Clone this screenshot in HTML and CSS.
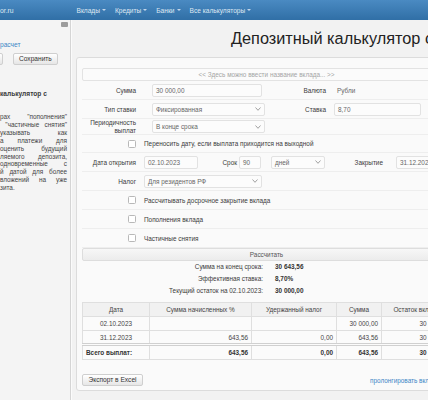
FILE: index.html
```html
<!DOCTYPE html>
<html lang="ru">
<head>
<meta charset="utf-8">
<title>Депозитный калькулятор</title>
<link rel="stylesheet" href="styles.css">
</head>
<body>
<header class="navbar">
  <div class="brand">or.ru</div>
  <nav class="menu">
    <span class="menu-item">Вклады<i class="caret"></i></span>
    <span class="menu-item">Кредиты<i class="caret"></i></span>
    <span class="menu-item">Банки<i class="caret"></i></span>
    <span class="menu-item">Все калькуляторы<i class="caret"></i></span>
  </nav>
</header>
<div class="layout">
  <aside class="sidebar">
    <div class="side-toggle"></div>
    <a class="side-link">расчет</a>
    <div class="side-buttons">
      <button class="btn btn-cut">Загрузить</button>
      <button class="btn">Сохранить</button>
    </div>
    <div class="side-heading">калькулятор с</div>
    <div class="side-text">
      <div class="jl">рах "пополнения"</div>
      <div class="jl">&nbsp;"частичные снятия"</div>
      <div class="jl">указывать как</div>
      <div class="jl">а платежи для</div>
      <div class="jl">оценить будущий</div>
      <div class="jl">ляемого депозита,</div>
      <div class="jl">одновременные с</div>
      <div class="jl">й датой для более</div>
      <div class="jl">вложений на уже</div>
      <div>зита.</div>
    </div>
  </aside>
  <main class="content">
    <h1 class="title">Депозитный калькулятор с капитализацией</h1>
    <div class="card">
      <div class="name-input">&lt;&lt; Здесь можно ввести название вклада... &gt;&gt;</div>

      <div class="row grid-row">
        <span class="lbl">Сумма</span>
        <div class="input">30 000,00</div>
        <span class="lbl">Валюта</span>
        <div class="plain">Рубли</div>
      </div>

      <div class="row grid-row">
        <span class="lbl">Тип ставки</span>
        <div class="input select w113">Фиксированная<svg class="chev" viewBox="0 0 6 4"><polyline points="0.5,0.5 3,3.3 5.5,0.5"/></svg></div>
        <span class="lbl">Ставка</span>
        <div class="input">8,70</div>
      </div>

      <div class="row grid-row row-c">
        <span class="lbl two">Периодичность<br>выплат</span>
        <div class="input select w113">В конце срока<svg class="chev" viewBox="0 0 6 4"><polyline points="0.5,0.5 3,3.3 5.5,0.5"/></svg></div>
      </div>

      <div class="row row-d">
        <span class="lbl-box"><span class="check"></span></span>
        <span class="ctext">Переносить дату, если выплата приходится на выходной</span>
      </div>

      <div class="row">
        <span class="lbl w54">Дата открытия</span>
        <div class="input date-open">02.10.2023</div>
        <span class="lbl srok-lbl">Срок</span>
        <div class="input srok">90</div>
        <div class="input select days">дней<svg class="chev" viewBox="0 0 6 4"><polyline points="0.5,0.5 3,3.3 5.5,0.5"/></svg></div>
        <span class="lbl close-lbl">Закрытие</span>
        <div class="input date-close">31.12.2023</div>
      </div>

      <div class="row">
        <span class="lbl w54">Налог</span>
        <div class="input select tax">Для резидентов РФ<svg class="chev" viewBox="0 0 6 4"><polyline points="0.5,0.5 3,3.3 5.5,0.5"/></svg></div>
      </div>

      <div class="row">
        <span class="lbl-box"><span class="check"></span></span>
        <span class="ctext">Рассчитывать досрочное закрытие вклада</span>
      </div>

      <div class="row">
        <span class="lbl-box"><span class="check"></span></span>
        <span class="ctext">Пополнения вклада</span>
      </div>

      <div class="row">
        <span class="lbl-box"><span class="check"></span></span>
        <span class="ctext">Частичные снятия</span>
      </div>

      <div class="calc">Рассчитать</div>

      <dl class="summary">
        <dt>Сумма на конец срока:</dt><dd>30 643,56</dd>
        <dt>Эффективная ставка:</dt><dd>8,70%</dd>
        <dt>Текущий остаток на 02.10.2023:</dt><dd>30 000,00</dd>
      </dl>

      <table class="table">
        <colgroup>
          <col class="c1"><col class="c2"><col class="c3"><col class="c4"><col class="c5">
        </colgroup>
        <thead>
          <tr><th>Дата</th><th>Сумма начисленных %</th><th>Удержанный налог</th><th>Сумма</th><th>Остаток вклада</th></tr>
        </thead>
        <tbody>
          <tr><td class="center">02.10.2023</td><td></td><td></td><td class="num">30 000,00</td><td class="num">30 000,00</td></tr>
          <tr><td class="center">31.12.2023</td><td class="num">643,56</td><td class="num">0,00</td><td class="num">643,56</td><td class="num">30 643,56</td></tr>
          <tr class="total"><td>Всего выплат:</td><td class="num">643,56</td><td class="num">0,00</td><td class="num">643,56</td><td class="num">30 643,56</td></tr>
        </tbody>
      </table>

      <div class="actions">
        <button class="btn btn-export">Экспорт в Excel</button>
        <a class="link">пролонгировать вклад</a>
      </div>
    </div>
  </main>
</div>
</body>
</html>
```

FILE: styles.css
```css
* { box-sizing: border-box; }
html, body { margin: 0; padding: 0; }
body {
  width: 428px;
  height: 400px;
  overflow: hidden;
  background: #f2f2f2;
  font-family: "Liberation Sans", Arial, sans-serif;
  font-size: 6.4px;
  color: #3a3a3a;
}

/* navbar */
.navbar {
  height: 20px;
  display: flex;
  align-items: center;
  background: linear-gradient(#4a8ac2, #306fa6);
  color: #dfe8f2;
  white-space: nowrap;
}
.brand { width: 72px; flex: none; font-size: 6.8px; }
.menu { display: flex; font-size: 6.6px; }
.menu-item { display: flex; align-items: center; padding: 0 4.5px; }
.caret {
  display: inline-block;
  margin-left: 2px;
  border-top: 2.5px solid #c3d6ea;
  border-left: 2px solid transparent;
  border-right: 2px solid transparent;
}

/* layout */
.layout { display: flex; height: 380px; }
.sidebar {
  width: 71px;
  flex: none;
  background: #f4f4f4;
  border-right: 1px solid #d5d5d5;
  box-shadow: 1px 0 0 #fbfbfb;
  overflow: hidden;
}
.side-toggle {
  width: 7px;
  height: 5px;
  margin: 2px 0 0 61px;
  background: #9c9c9c;
  border-radius: 1px;
}
.side-link { display: block; margin-top: 14px; line-height: 8px; color: #3a86c6; white-space: nowrap; font-size: 6.6px; }
.side-buttons { display: flex; gap: 10px; margin-top: 4px; }
.btn {
  height: 12px;
  padding: 0 5px;
  border: 1px solid #cfcfcf;
  border-radius: 2px;
  background: linear-gradient(#ffffff, #e6e6e6);
  font: inherit;
  font-size: 6.6px;
  color: #333;
  line-height: 10px;
  white-space: nowrap;
}
.btn-cut { width: 40px; flex: none; margin-left: -37px; }
.side-heading { margin-top: 25px; line-height: 8px; font-weight: bold; white-space: nowrap; font-size: 6.6px; }
.side-text { margin-top: 15px; width: 67px; line-height: 7.9px; color: #444; }
.jl { text-align: justify; text-align-last: justify; }

/* content */
.content { flex: none; width: 390px; padding-left: 5px; }
.title {
  margin: 8px 0 0;
  padding-left: 155px;
  font-size: 16.3px;
  font-weight: normal;
  line-height: 20px;
  color: #222;
  white-space: nowrap;
}
.card {
  margin-top: 9px;
  width: 381px;
  background: #fafafa;
  border: 1px solid #dcdcdc;
  border-radius: 3px;
  padding: 10px 5px 4px;
}
.name-input {
  height: 13px;
  line-height: 11px;
  border: 1px solid #e3e3e3;
  border-radius: 2px;
  background: #fbfbfb;
  text-align: center;
  color: #a5a5a5;
}

.row {
  height: 19px;
  display: flex;
  align-items: center;
  border-bottom: 1px solid #eeeeee;
  white-space: nowrap;
}
.grid-row {
  display: grid;
  grid-template-columns: 54px 118px 56px 87px;
  column-gap: 8px;
  align-items: center;
}
.row-c { height: 16px; }
.row-d { height: 18px; }
.lbl { text-align: right; color: #3a3a3a; }
.two { line-height: 7.4px; }
.w54 { width: 54px; flex: none; }

.input {
  height: 13px;
  border: 1px solid #e2e2e2;
  border-radius: 2px;
  background: #fcfcfc;
  color: #666;
  padding: 0 3px;
  line-height: 11px;
  white-space: nowrap;
  overflow: hidden;
}
.plain { color: #666; padding-left: 3px; }
.select {
  display: flex;
  align-items: center;
  justify-content: space-between;
  padding-right: 3px;
}
.chev { width: 6px; height: 4px; flex: none; fill: none; stroke: #8a8a8a; stroke-width: 0.8; }
.w113 { width: 113px; }
.row > .input:first-of-type { margin-left: 8px; }
.date-open { width: 54px; flex: none; }
.srok-lbl { width: 39px; flex: none; }
.srok { width: 22px; flex: none; margin-left: 2px; }
.days { width: 54px; flex: none; margin-left: 10px; }
.close-lbl { width: 58px; flex: none; }
.date-close { width: 60px; flex: none; margin-left: 13px; }
.tax { width: 118px; flex: none; }

.lbl-box { width: 54px; flex: none; display: flex; justify-content: flex-end; }
.check {
  width: 8px;
  height: 8px;
  border: 1px solid #b8b8b8;
  border-radius: 1.5px;
  background: #fff;
}
.ctext { margin-left: 8px; color: #3a3a3a; }

.calc {
  height: 13px;
  line-height: 11px;
  text-align: center;
  border: 1px solid #dddddd;
  border-radius: 2px;
  background: linear-gradient(#f7f7f7, #ececec);
  color: #555;
}

.summary {
  display: grid;
  grid-template-columns: 181px auto;
  column-gap: 12px;
  line-height: 12px;
  margin: 0;
}
.summary dt { text-align: right; color: #3a3a3a; }
.summary dd { margin: 0; font-weight: bold; color: #333; }

.table {
  margin-top: 5px;
  width: 369px;
  border-collapse: collapse;
  table-layout: fixed;
  background: #fbfbfb;
}
.c1 { width: 67px; } .c2 { width: 102px; } .c3 { width: 85px; } .c4 { width: 45px; } .c5 { width: 70px; }
.table th, .table td {
  border: 1px solid #dfdfdf;
  padding: 0 3px;
  height: 14px;
  white-space: nowrap;
  overflow: hidden;
  color: #444;
}
.table th { font-weight: normal; background: #f1f1f1; text-align: center; }
.table .center { text-align: center; }
.table .num { text-align: right; }
.table tr.total td { border-top: 3px double #d0d0d0; font-weight: bold; height: 15px; color: #333; }

.actions { display: flex; align-items: center; gap: 227px; margin-top: 14px; }
.btn-export { width: 61px; flex: none; }
.link { color: #3a86c6; white-space: nowrap; }
```
